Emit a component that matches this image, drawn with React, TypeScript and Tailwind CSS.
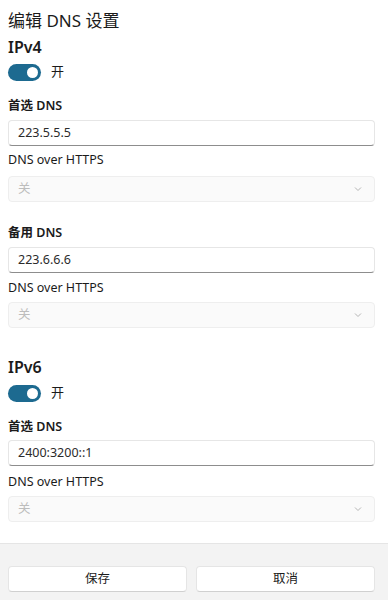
import React from 'react'

const font = { fontFamily: '"Noto Sans", "Noto Sans CJK SC", sans-serif' }

function Toggle({ label }: { label: string }) {
  return (
    <div className="flex items-center h-[24px]">
      <div className="w-[33px] h-[17px] rounded-full bg-[#1d6a90] flex items-center justify-end pr-[3px]">
        <div className="w-[11px] h-[11px] rounded-full bg-white" />
      </div>
      <span className="ml-[10px] text-[13px] text-[#1b1b1b]">{label}</span>
    </div>
  )
}

function TextBox({ value }: { value: string }) {
  return (
    <div className="h-[26px] flex items-center px-[9px] bg-white rounded-[4px] border border-[#e6e6e6] border-b-[#8d8d8d] text-[12.5px] text-[#2b2b2b]">
      {value}
    </div>
  )
}

function DisabledSelect() {
  return (
    <div className="h-[26px] flex items-center justify-between px-[9px] bg-[#fafafa] rounded-[4px] border border-[#eeeeee] text-[12.5px] text-[#bdbdbd]">
      <span>关</span>
      <svg className="w-[10px] h-[10px] mr-[2px]" viewBox="0 0 10 10" fill="none" stroke="#b5b5b5" strokeWidth={1}>
        <path d="M2 3.5l3 3 3-3" />
      </svg>
    </div>
  )
}

export default function App() {
  return (
    <div className="w-[388px] h-[600px] bg-white flex flex-col overflow-hidden" style={font}>
      <div className="flex-1 pl-2 pr-[13px] pt-2">
        <div className="h-[26px] flex items-center text-[17px] text-[#1b1b1b]">编辑 DNS 设置</div>
        <div className="h-[26px] flex items-center text-[16px] font-semibold text-[#1b1b1b]">IPv4</div>
        <Toggle label="开" />

        <div className="mt-[10px] h-[24px] flex items-center text-[12.5px] font-semibold text-[#1b1b1b]">首选 DNS</div>
        <div className="mt-[2px]"><TextBox value="223.5.5.5" /></div>
        <div className="mt-[2px] h-[24px] flex items-center text-[12.5px] text-[#1b1b1b]">DNS over HTTPS</div>
        <div className="mt-[4px]"><DisabledSelect /></div>

        <div className="mt-[19px] h-[24px] flex items-center text-[12.5px] font-semibold text-[#1b1b1b]">备用 DNS</div>
        <div className="mt-[2px]"><TextBox value="223.6.6.6" /></div>
        <div className="mt-[3px] h-[24px] flex items-center text-[12.5px] text-[#1b1b1b]">DNS over HTTPS</div>
        <div className="mt-[2px]"><DisabledSelect /></div>

        <div className="mt-[26px] h-[26px] flex items-center text-[16px] font-semibold text-[#1b1b1b]">IPv6</div>
        <div className="mt-[1px]"><Toggle label="开" /></div>

        <div className="mt-[10px] h-[24px] flex items-center text-[12.5px] font-semibold text-[#1b1b1b]">首选 DNS</div>
        <div className="mt-[1px]"><TextBox value="2400:3200::1" /></div>
        <div className="mt-[4px] h-[24px] flex items-center text-[12.5px] text-[#1b1b1b]">DNS over HTTPS</div>
        <div className="mt-[2px]"><DisabledSelect /></div>
      </div>

      {/* footer */}
      <div className="h-[57px] bg-[#f3f3f3] border-t border-[#e5e5e5] pl-2 pr-[13px] pt-[22px] grid grid-cols-2 gap-[9px]">
        <button className="h-[26px] bg-white rounded-[4px] border border-[#e5e5e5] border-b-[#d0d0d0] text-[12.5px] text-[#1b1b1b]">保存</button>
        <button className="h-[26px] bg-white rounded-[4px] border border-[#e5e5e5] border-b-[#d0d0d0] text-[12.5px] text-[#1b1b1b]">取消</button>
      </div>
    </div>
  )
}
